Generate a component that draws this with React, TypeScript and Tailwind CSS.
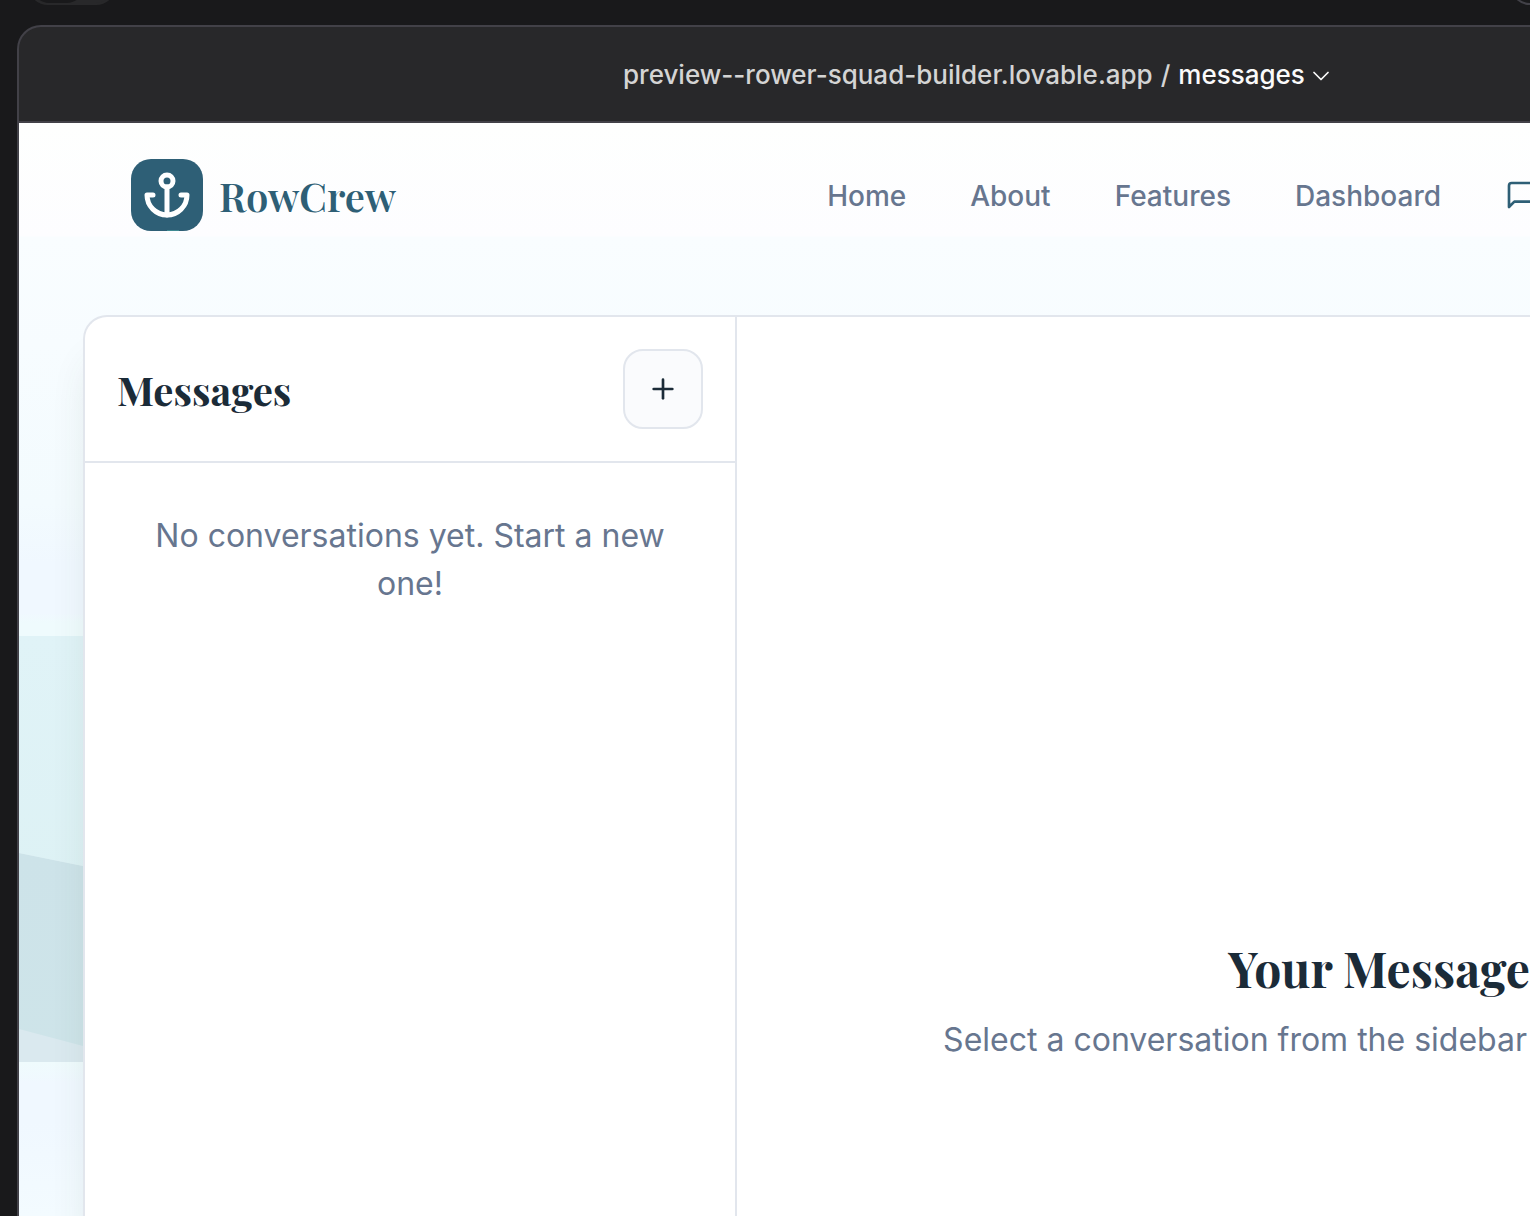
import { ChevronDown, Plus } from "lucide-react";

const links = ["Home", "About", "Features", "Dashboard"];

function Waves() {
  return (
    <svg
      className="absolute inset-x-0 top-[513px] h-[426px] w-full"
      viewBox="0 0 1511 426"
      preserveAspectRatio="xMinYMin slice"
      aria-hidden="true"
    >
      <defs>
        <linearGradient id="water" x1="0" y1="0" x2="0" y2="1">
          <stop offset="0" stopColor="#e0f3f7" />
          <stop offset="1" stopColor="#daf0f2" />
        </linearGradient>
        <linearGradient id="deep" x1="0" y1="0" x2="0" y2="1">
          <stop offset="0" stopColor="#cde3e9" />
          <stop offset="1" stopColor="#cfe6e9" />
        </linearGradient>
      </defs>
      <rect width="1511" height="426" fill="#dae9ef" />
      <path d="M0 217L64 230L1511 520V766L64 410L0 393Z" fill="url(#deep)" />
      <path d="M0 0H1511V520L64 230L0 217Z" fill="url(#water)" />
    </svg>
  );
}

function AnchorIcon() {
  return (
    <svg
      className="size-12"
      viewBox="0 0 24 24"
      fill="none"
      stroke="currentColor"
      strokeWidth="2.5"
      strokeLinecap="round"
      strokeLinejoin="round"
      aria-hidden="true"
    >
      <circle cx="12" cy="5" r="3" />
      <path d="M12 22V8" />
      <path d="M5 12H2a10 10 0 0 0 20 0h-3" />
    </svg>
  );
}

export default function App() {
  return (
    <div className="flex min-h-screen flex-col overflow-hidden bg-[#19191b] font-['Inter',sans-serif]">
      <div className="flex h-[5px] items-end justify-between overflow-hidden pl-7">
        <div className="flex h-12 w-[88px] shrink-0 rounded-[20px] border-2 border-[#28282a] bg-[#28282a]">
          <div className="w-14 rounded-[20px] bg-[#19191b]" />
        </div>
        <div className="-mr-12 h-12 w-[68px] shrink-0 rounded-[20px] border-2 border-[#424148]" />
      </div>

      <div className="mt-5 ml-[17px] flex flex-1 flex-col overflow-hidden rounded-tl-3xl border-t-2 border-l-2 border-[#424148] bg-[#28282a]">
        <div className="flex h-24 items-center border-b-2 border-[#424148] pl-[604px] text-[26px] font-medium whitespace-nowrap">
          <span className="text-[#d4d4d4]">preview--rower-squad-builder.lovable.app</span>
          <span className="mx-2 text-[#d4d4d4]">/</span>
          <button className="flex items-center gap-0.5 text-[#fafafa]">
            messages
            <ChevronDown className="mt-1 size-7" strokeWidth={1.5} />
          </button>
        </div>

        <div className="relative isolate flex flex-1 flex-col bg-[linear-gradient(180deg,#fefffe_0px,#fdfdff_113px,#f9fdff_114px,#f7fcff_220px,#f3fbfe_380px,#f0f8ff_440px,#f0f8ff_490px,#effbfd_500px,#effbfd_940px,#f0f8ff_960px,#f0f8ff_1000px,#f3fbff_1093px)]">
          <div className="absolute inset-0 -z-10 overflow-hidden">
            <Waves />
          </div>

          <header className="flex h-36 items-center justify-between pl-28 whitespace-nowrap">
            <a href="#" className="flex items-center gap-4">
              <span className="relative flex size-[72px] items-center justify-center overflow-hidden rounded-[20px] bg-[#2e5f76] text-white">
                <AnchorIcon />
                <span className="absolute bottom-0 left-9 h-px w-3 bg-[#3f8a92]" />
              </span>
              <span className="pt-0.5 font-['Playfair_Display','Liberation_Serif',serif] text-[40px] font-semibold text-[#2e5f76]">
                RowCrew
              </span>
            </a>
            <nav className="flex items-center text-[28px] font-medium text-[#67768f]">
              <div className="flex gap-16 pt-0.5">
                {links.map((name) => (
                  <a key={name} href="#">
                    {name}
                  </a>
                ))}
              </div>
              <a href="#" aria-label="Messages" className="ml-16 w-[25px] overflow-hidden text-[#2e5f76]">
                <svg
                  className="size-8"
                  viewBox="0 0 24 24"
                  fill="none"
                  stroke="currentColor"
                  strokeWidth="2"
                  strokeLinecap="round"
                  strokeLinejoin="round"
                >
                  <path d="M21 15a2 2 0 0 1-2 2H7l-4 4V5a2 2 0 0 1 2-2h14a2 2 0 0 1 2 2z" />
                </svg>
              </a>
            </nav>
          </header>

          <main className="mt-12 ml-16 flex flex-1 rounded-tl-3xl border-t-2 border-l-2 border-[#e2e6ed] bg-white shadow-[0_40px_40px_-8px_rgba(60,70,60,0.12)]">
            <aside className="w-[652px] shrink-0 border-r-2 border-[#e2e6ed]">
              <div className="flex items-center justify-between border-b-2 border-[#e2e6ed] p-8">
                <h2 className="pt-0.5 font-['Playfair_Display','Liberation_Serif',serif] text-[40px] font-bold text-[#1b2b38]">
                  Messages
                </h2>
                <button
                  aria-label="New conversation"
                  className="flex size-20 items-center justify-center rounded-[20px] border-2 border-[#e2e6ed] bg-[#fafbfd] text-[#1b2b38]"
                >
                  <Plus className="size-8" strokeWidth={2} />
                </button>
              </div>
              <p className="px-16 pt-[49px] text-center text-[32px] leading-[48px] text-[#67768f]">
                No conversations yet. Start a new one!
              </p>
            </aside>
            <section className="flex flex-1 flex-col items-end pt-[619px] whitespace-nowrap">
              <h3 className="font-['Playfair_Display','Liberation_Serif',serif] text-[48px] leading-16 font-bold text-[#1b2b38]">
                Your Message
              </h3>
              <p className="mt-4 pr-[3px] text-[32px] leading-12 text-[#67768f]">
                Select a conversation from the sidebar
              </p>
            </section>
          </main>
        </div>
      </div>
    </div>
  );
}
